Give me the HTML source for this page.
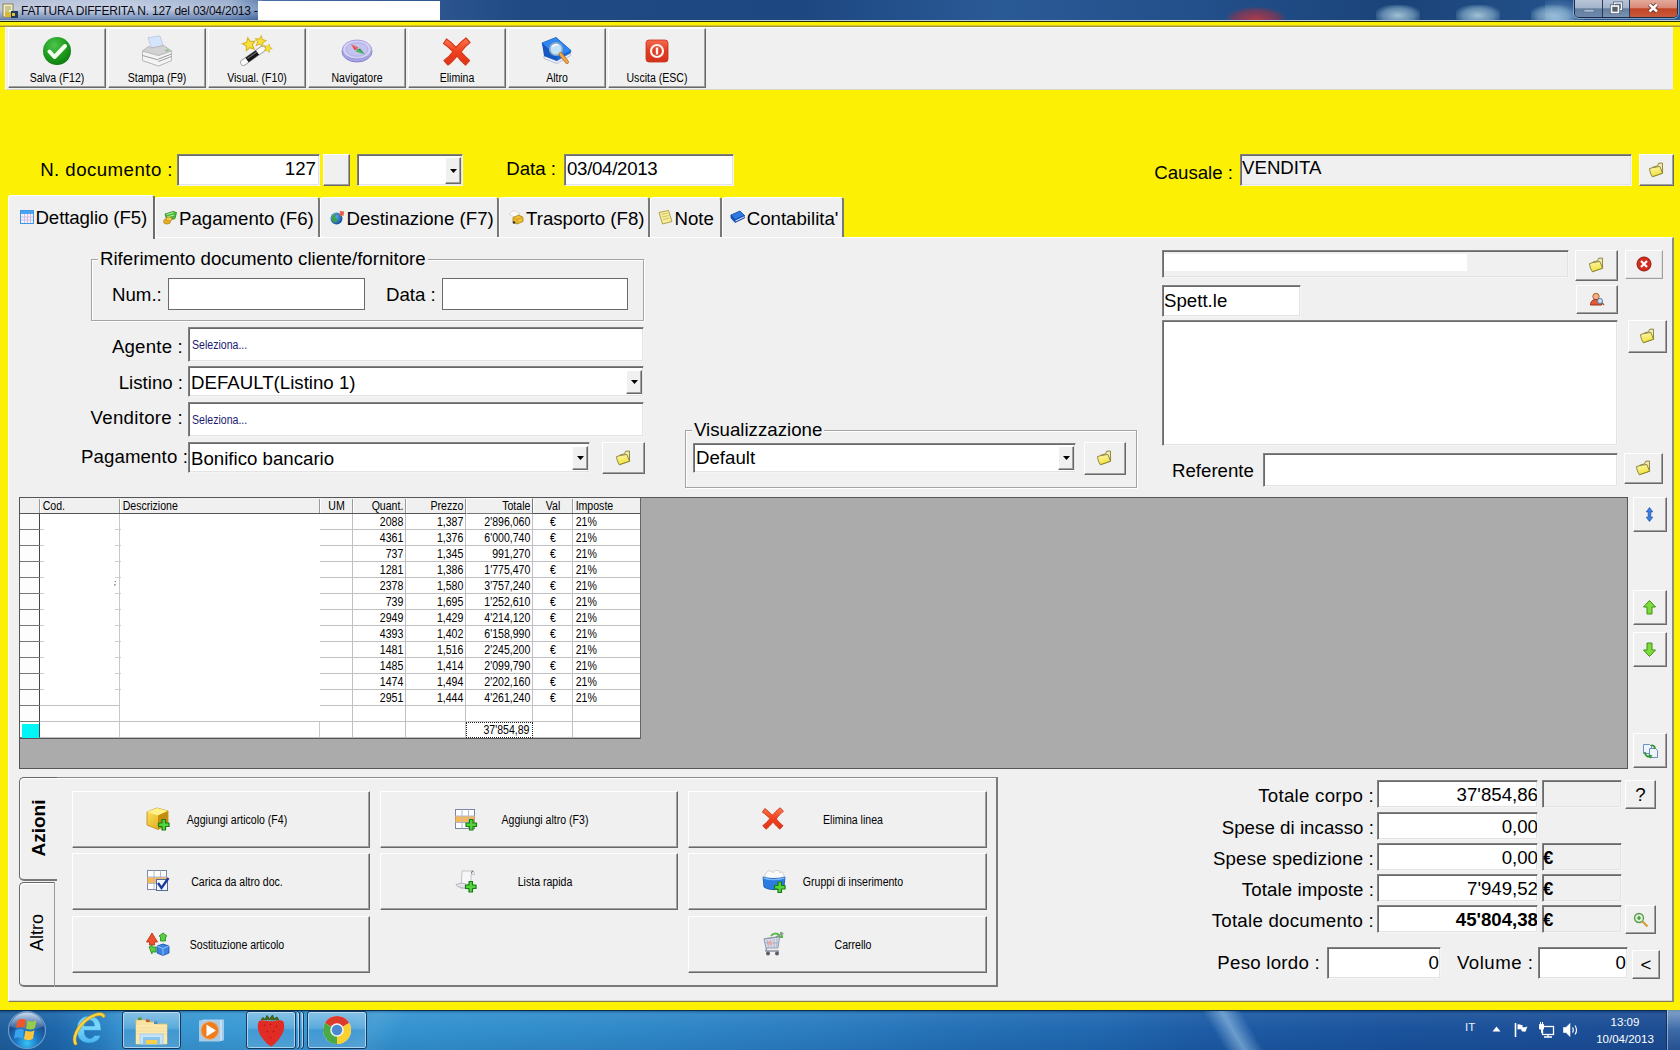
<!DOCTYPE html><html><head><meta charset="utf-8"><title>FATTURA DIFFERITA N. 127</title><style>*{box-sizing:border-box;margin:0;padding:0}
html,body{width:1680px;height:1050px;overflow:hidden;background:#fcf105;font-family:"Liberation Sans",sans-serif;color:#000}
.a{position:absolute}
.btn{position:absolute;background:#f0f0f0;border-top:1px solid #fff;border-left:1px solid #fff;border-right:1px solid #696969;border-bottom:1px solid #696969;box-shadow:inset -1px -1px 0 #a0a0a0}
.fld{position:absolute;background:#fff;border-top:1px solid #828282;border-left:1px solid #828282;border-right:1px solid #f4f4f4;border-bottom:1px solid #f4f4f4;box-shadow:inset 1px 1px 0 #696969, inset -1px -1px 0 #e3e3e3;font-size:18.67px;line-height:22px;white-space:nowrap;overflow:hidden}
.fld.g{background:#f0f0f0}
.lbl{position:absolute;font-size:18.67px;line-height:22px;white-space:nowrap}
.r{text-align:right}
.ms{position:absolute;font-size:12px;line-height:14px;white-space:nowrap;transform:scaleX(.88);transform-origin:0 50%}
.ms.c{text-align:center;transform-origin:50% 50%}
.ms.rr{text-align:right;transform-origin:100% 50%}
svg{position:absolute;overflow:visible}
.grp{position:absolute;border:1px solid #a4a4a4;box-shadow:1px 1px 0 #fff, inset 1px 1px 0 #fff}
.btn.lt{border-right-color:#a0a0a0;border-bottom-color:#a0a0a0;box-shadow:inset -1px -1px 0 #e0e0e0}
</style></head><body>
<div class="a" style="left:0px;top:0px;width:1680px;height:20px;background:linear-gradient(90deg,#aab6d0 0px,#b4c2dc 120px,#8ea4c8 230px,#4a6ea6 262px,#1f4a84 520px,#1d4781 800px,#2a5a96 1000px,#234f8a 1200px,#1a4379 1400px,#2c5c98 1680px)"></div>
<div class="a" style="left:0px;top:0px;width:262px;height:20px;background:linear-gradient(180deg,rgba(255,255,255,.12),rgba(255,255,255,.28) 45%,rgba(70,105,160,.5) 92%,rgba(60,90,140,.7) 100%)"></div>
<div class="a" style="left:258px;top:1px;width:182px;height:19px;background:#fff"></div>
<div class="a" style="left:0px;top:20px;width:1680px;height:1px;background:#b9cfd2"></div>
<div class="a" style="left:0px;top:21px;width:1680px;height:1px;background:#262c00"></div>
<div class="a" style="left:21px;top:4px;width:260px;font-size:12px;line-height:14px;white-space:nowrap;color:#0a0a14;letter-spacing:-0.22px">FATTURA DIFFERITA N. 127 del 03/04/2013 -</div>
<svg style="left:2px;top:3px" width="17" height="16" viewBox="0 0 17 16"><rect x="1" y="1" width="10" height="13" fill="#f3efc8" stroke="#8a8250"/><path d="M3 4h6M3 6h6M3 8h4" stroke="#a09a60" stroke-width="1"/><rect x="3" y="9" width="6" height="5" fill="#d8b838"/><rect x="9" y="8" width="7" height="7" fill="#1d3d5c"/><rect x="10" y="10" width="3" height="3" fill="#e0c040"/></svg>
<div class="a" style="left:1226px;top:7px;width:60px;height:13px;background:radial-gradient(ellipse at 50% 100%,#b03a48 0%,rgba(160,50,70,.6) 50%,rgba(160,50,70,0) 75%)"></div>
<div class="a" style="left:1376px;top:5px;width:44px;height:15px;background:radial-gradient(ellipse at 50% 70%,rgba(175,205,220,.9) 0%,rgba(140,180,205,.6) 50%,rgba(120,160,190,0) 80%)"></div>
<div class="a" style="left:1456px;top:5px;width:44px;height:15px;background:radial-gradient(ellipse at 50% 70%,rgba(175,205,220,.9) 0%,rgba(140,180,205,.6) 50%,rgba(120,160,190,0) 80%)"></div>
<div class="a" style="left:1531px;top:5px;width:44px;height:15px;background:radial-gradient(ellipse at 50% 70%,rgba(175,205,220,.9) 0%,rgba(140,180,205,.6) 50%,rgba(120,160,190,0) 80%)"></div>
<div class="a" style="left:1545px;top:0px;width:40px;height:20px;background:radial-gradient(ellipse at 30% 100%,rgba(150,190,220,.75) 0%,rgba(120,165,205,.35) 50%,rgba(120,165,205,0) 80%)"></div>
<div class="a" style="left:1574px;top:0px;width:104px;height:18px;border:1px solid #1b2b45;border-top:none;border-radius:0 0 5px 5px;background:#6f86a8;overflow:hidden;box-shadow:0 0 0 1px rgba(190,210,235,.55)"><div class="a" style="left:0;top:0;width:28px;height:17px;background:linear-gradient(180deg,#b8c4d8 0%,#a4b4cc 45%,#64809e 52%,#6e88ae 100%);border-right:1px solid #2a3b58"></div><div class="a" style="left:28px;top:0;width:27px;height:17px;background:linear-gradient(180deg,#b8c4d8 0%,#a4b4cc 45%,#64809e 52%,#7a92b4 100%);border-right:1px solid #2a3b58"></div><div class="a" style="left:55px;top:0;width:48px;height:17px;background:linear-gradient(180deg,#e4aa9c 0%,#d88a78 45%,#c04424 52%,#c85a3c 100%)"></div></div>
<svg style="left:1574px;top:0" width="104" height="18" viewBox="0 0 104 18"><rect x="10" y="9.500" width="10" height="2.500" fill="#a8bcd4" stroke="#5a708e" stroke-width=".6"/><rect x="40.500" y="3" width="7" height="6.500" fill="none" stroke="#3c4a62" stroke-width="2.800"/><rect x="40.500" y="3" width="7" height="6.500" fill="none" stroke="#f4f6fa" stroke-width="1.500"/><rect x="37.500" y="6" width="7" height="6.500" fill="#5a5f6a" stroke="#3c4a62" stroke-width="3"/><rect x="37.500" y="6" width="7" height="6.500" fill="#5a5f6a" stroke="#f8f9fc" stroke-width="1.700"/><path d="M75.500 4.500l7.500 7M83 4.500l-7.500 7" stroke="#6a2a20" stroke-width="4.200"/><path d="M75.500 4.500l7.500 7M83 4.500l-7.500 7" stroke="#fff" stroke-width="2.500"/></svg>
<div class="a" style="left:5px;top:27px;width:1668px;height:63px;background:#f0f0f0;border-top:1px solid #fff;border-left:1px solid #fff;border-bottom:1px solid #d8d8c0;"></div>
<div class="a" style="left:0px;top:25px;width:1680px;height:2px;background:linear-gradient(180deg,#e8d830,#8a8030)"></div>
<div class="btn" style="left:8px;top:28px;width:98px;height:60px;"></div>
<div class="ms c" style="left:8px;top:71px;width:98px;">Salva (F12)</div>
<div class="btn" style="left:108px;top:28px;width:98px;height:60px;"></div>
<div class="ms c" style="left:108px;top:71px;width:98px;">Stampa (F9)</div>
<div class="btn" style="left:208px;top:28px;width:98px;height:60px;"></div>
<div class="ms c" style="left:208px;top:71px;width:98px;">Visual. (F10)</div>
<div class="btn" style="left:308px;top:28px;width:98px;height:60px;"></div>
<div class="ms c" style="left:308px;top:71px;width:98px;">Navigatore</div>
<div class="btn" style="left:408px;top:28px;width:98px;height:60px;"></div>
<div class="ms c" style="left:408px;top:71px;width:98px;">Elimina</div>
<div class="btn" style="left:508px;top:28px;width:98px;height:60px;"></div>
<div class="ms c" style="left:508px;top:71px;width:98px;">Altro</div>
<div class="btn" style="left:608px;top:28px;width:98px;height:60px;"></div>
<div class="ms c" style="left:608px;top:71px;width:98px;">Uscita (ESC)</div>
<svg style="left:42px;top:36px" width="30" height="30" viewBox="0 0 30 30"><defs><radialGradient id="gck" cx="40%" cy="30%" r="75%"><stop offset="0" stop-color="#4cc64c"/><stop offset=".6" stop-color="#1e9a1e"/><stop offset="1" stop-color="#0c7a10"/></radialGradient></defs><circle cx="15" cy="15" r="14" fill="url(#gck)"/><path d="M7.500 15.500l5 5.500l10.500-11" fill="none" stroke="#f4fff0" stroke-width="4" stroke-linecap="round" stroke-linejoin="round"/></svg>
<svg style="left:141px;top:35px" width="32" height="32" viewBox="0 0 32 32"><path d="M7 2.500c4 0 8-1.500 12-1.500l3.500 10.500l-12 2z" fill="#d4e4fa" stroke="#b8c8e0" stroke-width=".8"/><path d="M1.500 16l6-4.500l3 1.500l12-2.500l8 5.500v9.500l-13 5.500l-16-5.500z" fill="#e6e6e6" stroke="#b0b0b0" stroke-width=".8"/><path d="M1.500 16l16 4.500l13-4.500v9.500l-13 5.500l-16-5.500z" fill="#f4f4f4" stroke="#b4b4b4" stroke-width=".8"/><path d="M17.500 24l13-5M17.500 26.500l13-5M1.500 20.500l16 4.500" stroke="#9c9c9c" stroke-width="1" fill="none"/><path d="M1.500 16l16 4.500l13-4.500l-8-5.500l-12 2.500l-3-1.500z" fill="#d2d2d2" stroke="#b0b0b0" stroke-width=".6"/><ellipse cx="26" cy="15.500" rx="2" ry="1" fill="#8cc07c"/></svg>
<svg style="left:241px;top:35px" width="32" height="32" viewBox="0 0 32 32"><path d="M2.500 27.500l19-13.500" stroke="#9a9a9a" stroke-width="6.500" stroke-linecap="round"/><path d="M2.500 27.500l19-13.500" stroke="#fafafa" stroke-width="5" stroke-linecap="round"/><path d="M6 25l10.500-7.500" stroke="#141414" stroke-width="5.400"/><path d="M6.500 23.500l9.500-6.800" stroke="#6a6a6a" stroke-width="1.200"/><path d="M0 -5l1.500 3.300l3.600 .4l-2.700 2.500l.8 3.600l-3.200-1.800l-3.200 1.800l.8-3.600l-2.700-2.500l3.600-.4z" transform="translate(8 9) scale(1.250) rotate(-12)" fill="#f6e23c" stroke="#d8b420" stroke-width=".9"/><path d="M0 -5l1.500 3.300l3.600 .4l-2.700 2.500l.8 3.600l-3.200-1.800l-3.200 1.800l.8-3.600l-2.700-2.500l3.600-.4z" transform="translate(19.500 6) scale(1.050) rotate(10)" fill="#f6e23c" stroke="#d8b420" stroke-width=".9"/><path d="M0 -5l1.500 3.300l3.600 .4l-2.700 2.500l.8 3.600l-3.200-1.800l-3.200 1.800l.8-3.600l-2.700-2.500l3.600-.4z" transform="translate(27 13) scale(.8) rotate(20)" fill="#f6e23c" stroke="#d8b420" stroke-width=".9"/></svg>
<svg style="left:341px;top:38px" width="32" height="26" viewBox="0 0 32 26"><ellipse cx="16" cy="13.500" rx="15" ry="10.500" fill="#a8a4e4" stroke="#8884cc"/><ellipse cx="16" cy="11.500" rx="14.500" ry="9.500" fill="#d2d0f4" stroke="#9894d8" stroke-width=".8"/><ellipse cx="16" cy="11.500" rx="11" ry="6.800" fill="#c4c2ee" stroke="#aaa6e0" stroke-width=".8"/><path d="M16 11.500l-6-5.500l3.500 6z" fill="#e03c3c"/><path d="M16 11.500l-6-5.500l7.500 3.500z" fill="#f06060"/><path d="M16 11.500l8 5l-5-6z" fill="#2c9a4c"/><path d="M16 11.500l8 5l-9.500-3z" fill="#48b868"/></svg>
<svg style="left:443px;top:37px" width="29" height="29" viewBox="0 0 29 29"><defs><linearGradient id="grx" x1="0" y1="0" x2="0" y2="1"><stop offset="0" stop-color="#ff7a50"/><stop offset=".5" stop-color="#f0401e"/><stop offset="1" stop-color="#e03418"/></linearGradient></defs><path d="M3.500 2c2.500 1.500 6 4.500 9.500 8.500c3-3.500 6.500-7 10-9.500l4 4.500c-3.500 2.500-6.500 6-9 9.500c3 3.500 6 6.500 8.500 8.500l-4 4.500c-3-2.500-6-5.500-8.500-9c-3 3.500-6 7-9 9l-4-4.500c3.500-2.500 6.500-5.500 9-9c-3-3-6.500-6-9.500-8z" fill="url(#grx)" stroke="#d43a1c" stroke-width="1.200" stroke-linejoin="round"/></svg>
<svg style="left:541px;top:37px" width="32" height="30" viewBox="0 0 32 30"><path d="M1 6l14-5.500l15 13l-1 3l-13 7.500l-13-13z" fill="#1868d8" stroke="#0c4cb0" stroke-width=".8"/><path d="M3 19l13 5l13-7.500l.5 2l-13.500 8l-13-5z" fill="#f4f4fc" stroke="#8898c8" stroke-width=".6"/><path d="M1 6l14-5.500l15 13l-14 6z" fill="#2f86ee"/><path d="M1 6l2 13l13 5v-4.500z" fill="#1458c0"/><circle cx="15" cy="12" r="6.300" fill="#c2e2f8" stroke="#88a8c8" stroke-width="1.600"/><path d="M11.500 10c1-2 3.500-3 5.500-2" fill="none" stroke="#fff" stroke-width="1.400"/><path d="M19.500 17l6.500 8" stroke="#b87828" stroke-width="3.800" stroke-linecap="round"/><path d="M19.500 17l6.500 8" stroke="#f4a848" stroke-width="2.200" stroke-linecap="round"/></svg>
<svg style="left:645px;top:39px" width="24" height="24" viewBox="0 0 24 24"><defs><linearGradient id="gex" x1="0" y1="0" x2="0" y2="1"><stop offset="0" stop-color="#f46a50"/><stop offset=".5" stop-color="#e03c24"/><stop offset="1" stop-color="#d4341c"/></linearGradient></defs><rect x="1" y="1" width="22" height="22" rx="3" fill="url(#gex)" stroke="#c83018" stroke-width=".8"/><circle cx="12" cy="12" r="6" fill="none" stroke="#fff4ee" stroke-width="2.200"/><path d="M12 8.500v7" stroke="#fff4ee" stroke-width="2.400"/></svg>
<div class="lbl r" style="left:20px;top:159px;width:153px;letter-spacing:.45px">N. documento :</div>
<div class="fld" style="left:177px;top:154px;width:143px;height:32px;text-align:right;padding:3px 3px 0 0">127</div>
<div class="btn" style="left:323px;top:154px;width:27px;height:32px;"></div>
<div class="fld" style="left:357px;top:154px;width:106px;height:32px;"></div>
<div class="btn" style="left:445px;top:157px;width:16px;height:27px;"><svg style="left:4px;top:11px" width="7" height="4" viewBox="0 0 7 4"><path d="M0 0h7l-3.500 4z" fill="#000"/></svg></div>
<div class="lbl r" style="left:500px;top:158px;width:56px;">Data :</div>
<div class="fld" style="left:564px;top:154px;width:170px;height:32px;padding:3px 0 0 2px;letter-spacing:-.3px">03/04/2013</div>
<div class="lbl r" style="left:1140px;top:162px;width:93px;">Causale :</div>
<div class="fld g" style="left:1240px;top:154px;width:392px;height:32px;padding:0 0 0 1px;line-height:25px">VENDITA</div>
<div class="a" style="left:8px;top:237px;width:1666px;height:765px;background:#f0f0f0;border-left:1px solid #fff;border-top:1px solid #fff;border-right:2px solid #8c8c80;border-bottom:1px solid #85794f;box-shadow:inset 0 -1px 0 #d8d8d0"></div>
<div class="a" style="left:8px;top:195px;width:147px;height:44px;background:#f0f0f0;border-left:1px solid #fff;border-top:1px solid #fff;border-right:2px solid #6c6c6c;border-radius:3px 3px 0 0"></div>
<div class="lbl" style="left:35.5px;top:207px;width:119px;letter-spacing:-.1px">Dettaglio (F5)</div>
<div class="a" style="left:155px;top:197px;width:165px;height:40px;background:#f0f0f0;border-left:1px solid #fff;border-top:1px solid #fff;border-right:2px solid #787878;border-radius:3px 3px 0 0"></div>
<div class="lbl" style="left:179px;top:208px;width:140px;">Pagamento (F6)</div>
<div class="a" style="left:320px;top:197px;width:179px;height:40px;background:#f0f0f0;border-left:1px solid #fff;border-top:1px solid #fff;border-right:2px solid #787878;border-radius:3px 3px 0 0"></div>
<div class="lbl" style="left:346.5px;top:208px;width:154px;">Destinazione (F7)</div>
<div class="a" style="left:499px;top:197px;width:151px;height:40px;background:#f0f0f0;border-left:1px solid #fff;border-top:1px solid #fff;border-right:2px solid #787878;border-radius:3px 3px 0 0"></div>
<div class="lbl" style="left:526px;top:208px;width:126px;">Trasporto (F8)</div>
<div class="a" style="left:650px;top:197px;width:72px;height:40px;background:#f0f0f0;border-left:1px solid #fff;border-top:1px solid #fff;border-right:2px solid #787878;border-radius:3px 3px 0 0"></div>
<div class="lbl" style="left:674.5px;top:208px;width:47px;">Note</div>
<div class="a" style="left:722px;top:197px;width:122px;height:40px;background:#f0f0f0;border-left:1px solid #fff;border-top:1px solid #fff;border-right:2px solid #787878;border-radius:3px 3px 0 0"></div>
<div class="lbl" style="left:746.7px;top:208px;width:97px;">Contabilita'</div>
<svg style="left:20px;top:210px" width="14" height="14" viewBox="0 0 14 14"><rect x=".5" y=".5" width="13" height="13" fill="#fdeef4" stroke="#3a98e8"/><rect x="1" y="1" width="12" height="3" fill="#4aa4f0"/><path d="M1 7h12M1 10h12M4.500 4v9M7.500 4v9M10.500 4v9" stroke="#c8c0e8" stroke-width="1"/></svg>
<svg style="left:163px;top:211px" width="14" height="14" viewBox="0 0 14 14"><path d="M2 3l8-2.500l3.500 1l-1.500 6l-8 2.500z" fill="#4cb83c" stroke="#2a8a24" stroke-width=".8"/><path d="M3.500 3.500l7-2M4 6l7-2" stroke="#b8f0a0" stroke-width="1"/><ellipse cx="4" cy="10.500" rx="3.500" ry="2.500" fill="#e8b028" stroke="#b88418" stroke-width=".8"/><ellipse cx="6" cy="8" rx="3" ry="2" fill="#f4cc48" stroke="#b88418" stroke-width=".7"/></svg>
<svg style="left:330px;top:210px" width="15" height="15" viewBox="0 0 15 15"><defs><radialGradient id="ggl" cx="35%" cy="35%" r="70%"><stop offset="0" stop-color="#68b8f0"/><stop offset="1" stop-color="#14509c"/></radialGradient></defs><circle cx="6.500" cy="8.500" r="6" fill="url(#ggl)"/><path d="M2 7c1-2 3-3 4-2.500c1 1-1 2-.5 3.500c.5 1 2 1 2 2.500c-1 2-3 2.500-4.500 1c-1-1.500-1.500-3-1-4.500z" fill="#3ca04c"/><path d="M9.500 1l4.500 .5l-.5 4.500l-2-1l-1 1.500l-1.500-1.500l1.500-1.500z" fill="#e85838"/></svg>
<svg style="left:508px;top:210px" width="16" height="15" viewBox="0 0 16 15"><path d="M1 4l5-3.500l6 3l-5 4z" fill="#fafafa" stroke="#d0d0d0" stroke-width=".7"/><path d="M5 7.500l6-2.500l4 2.500v4l-6 2.500l-4-2z" fill="#f0c030" stroke="#a87c18" stroke-width=".8"/><path d="M5 7.500l4 2l6-2.500M9 9.500v4.500" fill="none" stroke="#c89820" stroke-width=".8"/><circle cx="6" cy="12.500" r="1.300" fill="#333"/></svg>
<svg style="left:658px;top:210px" width="15" height="15" viewBox="0 0 15 15"><path d="M1 2.500l9.500-2l3.500 11l-9.500 2.500z" fill="#f8ec98" stroke="#a89840" stroke-width=".9"/><path d="M3.500 4.500l6.500-1.500M4.300 7l6.500-1.500M5 9.500l6.500-1.500" stroke="#c8b860" stroke-width=".8"/></svg>
<svg style="left:730px;top:210px" width="15" height="14" viewBox="0 0 15 14"><path d="M1 5l9-4l4.500 4.500l-9.500 4.500z" fill="#2f7ae0" stroke="#0c48a8" stroke-width=".8"/><path d="M1 5l4 5l9.500-4.500v2.500l-9.500 4.500l-4-4.500z" fill="#1858c0" stroke="#0c48a8" stroke-width=".8"/><path d="M5.500 11l9-4.300" stroke="#e8f0ff" stroke-width="1"/></svg>
<div class="grp" style="left:91px;top:259px;width:553px;height:62px;"></div>
<div class="lbl" style="left:98px;top:248px;background:#f0f0f0;padding:0 2px">Riferimento documento cliente/fornitore</div>
<div class="lbl" style="left:112px;top:284px;width:60px;">Num.:</div>
<div class="fld" style="left:168px;top:278px;width:197px;height:32px;box-shadow:none;border:1px solid #6a6a6a"></div>
<div class="lbl" style="left:386px;top:284px;width:60px;">Data :</div>
<div class="fld" style="left:442px;top:278px;width:186px;height:32px;box-shadow:none;border:1px solid #6a6a6a"></div>
<div class="lbl r" style="left:60px;top:336px;width:123px;letter-spacing:.2px">Agente :</div>
<div class="fld" style="left:188px;top:327px;width:456px;height:35px;"><span style="font-size:12px;color:#1a1a70;position:absolute;left:3px;top:6px;display:inline-block;transform:scaleX(.88);transform-origin:0 50%">Seleziona...</span></div>
<div class="lbl r" style="left:60px;top:372px;width:123px;">Listino :</div>
<div class="fld" style="left:188px;top:366px;width:456px;height:31px;padding:5px 0 0 2px">DEFAULT(Listino 1)</div>
<div class="btn" style="left:626px;top:370px;width:16px;height:24px;"><svg style="left:4px;top:9px" width="7" height="4" viewBox="0 0 7 4"><path d="M0 0h7l-3.500 4z" fill="#000"/></svg></div>
<div class="lbl r" style="left:60px;top:407px;width:123px;letter-spacing:.3px">Venditore :</div>
<div class="fld" style="left:188px;top:402px;width:456px;height:35px;"><span style="font-size:12px;color:#1a1a70;position:absolute;left:3px;top:6px;display:inline-block;transform:scaleX(.88);transform-origin:0 50%">Seleziona...</span></div>
<div class="lbl r" style="left:60px;top:446px;width:128px;letter-spacing:.12px">Pagamento :</div>
<div class="fld" style="left:188px;top:442px;width:402px;height:31px;padding:5px 0 0 2px">Bonifico bancario</div>
<div class="btn" style="left:572px;top:446px;width:16px;height:24px;"><svg style="left:4px;top:9px" width="7" height="4" viewBox="0 0 7 4"><path d="M0 0h7l-3.500 4z" fill="#000"/></svg></div>
<svg width="0" height="0" style="left:0;top:0"><defs><linearGradient id="gfold" x1="0" y1="0" x2=".3" y2="1"><stop offset="0" stop-color="#fbf6b8"/><stop offset="1" stop-color="#f3e338"/></linearGradient></defs></svg>
<div class="btn" style="left:602px;top:442px;width:43px;height:32px;"><svg style="left:13px;top:7px" width="15" height="16" viewBox="0 0 15 16"><path d="M3.800 5.200L8.600 3.800L9.600 1.300L13.400 1L13.600 11.200L3.400 14.700Z" fill="#f5ecb4" stroke="#857a34" stroke-width=".9" stroke-linejoin="round"/><path d="M.5 6.600L3.800 5.600L10.800 4.400L13.600 11.200L3.400 14.700C1.800 12.500 .8 9.500 .5 6.600Z" fill="url(#gfold)" stroke="#857a34" stroke-width=".9" stroke-linejoin="round"/></svg></div>
<div class="btn" style="left:1639px;top:154px;width:35px;height:32px;"><svg style="left:9px;top:7px" width="15" height="16" viewBox="0 0 15 16"><path d="M3.800 5.200L8.600 3.800L9.600 1.300L13.400 1L13.600 11.200L3.400 14.700Z" fill="#f5ecb4" stroke="#857a34" stroke-width=".9" stroke-linejoin="round"/><path d="M.5 6.600L3.800 5.600L10.800 4.400L13.600 11.200L3.400 14.700C1.800 12.500 .8 9.500 .5 6.600Z" fill="url(#gfold)" stroke="#857a34" stroke-width=".9" stroke-linejoin="round"/></svg></div>
<div class="grp" style="left:685px;top:430px;width:452px;height:58px;"></div>
<div class="lbl" style="left:692px;top:419px;background:#f0f0f0;padding:0 2px">Visualizzazione</div>
<div class="fld" style="left:693px;top:443px;width:383px;height:30px;padding:3px 0 0 2px">Default</div>
<div class="btn" style="left:1058px;top:446px;width:16px;height:24px;"><svg style="left:4px;top:9px" width="7" height="4" viewBox="0 0 7 4"><path d="M0 0h7l-3.500 4z" fill="#000"/></svg></div>
<div class="btn" style="left:1084px;top:442px;width:42px;height:33px;"><svg style="left:12px;top:7px" width="15" height="16" viewBox="0 0 15 16"><path d="M3.800 5.200L8.600 3.800L9.600 1.300L13.400 1L13.600 11.200L3.400 14.700Z" fill="#f5ecb4" stroke="#857a34" stroke-width=".9" stroke-linejoin="round"/><path d="M.5 6.600L3.800 5.600L10.800 4.400L13.600 11.200L3.400 14.700C1.800 12.500 .8 9.500 .5 6.600Z" fill="url(#gfold)" stroke="#857a34" stroke-width=".9" stroke-linejoin="round"/></svg></div>
<div class="fld g" style="left:1162px;top:250px;width:407px;height:28px;"><div class="a" style="left:1px;top:3px;width:303px;height:17px;background:#fff"></div></div>
<div class="btn" style="left:1575px;top:250px;width:43px;height:31px;"><svg style="left:13px;top:6px" width="15" height="16" viewBox="0 0 15 16"><path d="M3.800 5.200L8.600 3.800L9.600 1.300L13.400 1L13.600 11.200L3.400 14.700Z" fill="#f5ecb4" stroke="#857a34" stroke-width=".9" stroke-linejoin="round"/><path d="M.5 6.600L3.800 5.600L10.800 4.400L13.600 11.200L3.400 14.700C1.800 12.500 .8 9.500 .5 6.600Z" fill="url(#gfold)" stroke="#857a34" stroke-width=".9" stroke-linejoin="round"/></svg></div>
<div class="btn lt" style="left:1625px;top:250px;width:38px;height:29px;"><svg style="left:10px;top:5px" width="16" height="16" viewBox="0 0 16 16"><circle cx="8" cy="8" r="7" fill="#d62a1e" stroke="#8c1a10"/><path d="M5 5l6 6M11 5l-6 6" stroke="#fff" stroke-width="2.200"/></svg></div>
<div class="fld" style="left:1162px;top:285px;width:139px;height:32px;padding:4px 0 0 1px">Spett.le</div>
<div class="btn" style="left:1576px;top:285px;width:42px;height:29px;"><svg style="left:12px;top:6px" width="16" height="16" viewBox="0 0 16 16"><circle cx="7" cy="4.500" r="3.200" fill="#f0b088" stroke="#b06030"/><path d="M1.500 13c0-4 2.500-5.500 5.500-5.500s5.500 1.500 5.500 5.500z" fill="#e05a3a" stroke="#a03018"/><circle cx="11" cy="9" r="2.500" fill="#cfe4f8" stroke="#5080b0"/><path d="M12.800 10.800l2.200 2.200" stroke="#886030" stroke-width="1.500"/></svg></div>
<div class="fld" style="left:1162px;top:320px;width:456px;height:126px;"></div>
<div class="btn" style="left:1628px;top:320px;width:39px;height:33px;"><svg style="left:11px;top:7px" width="15" height="16" viewBox="0 0 15 16"><path d="M3.800 5.200L8.600 3.800L9.600 1.300L13.400 1L13.600 11.200L3.400 14.700Z" fill="#f5ecb4" stroke="#857a34" stroke-width=".9" stroke-linejoin="round"/><path d="M.5 6.600L3.800 5.600L10.800 4.400L13.600 11.200L3.400 14.700C1.800 12.500 .8 9.500 .5 6.600Z" fill="url(#gfold)" stroke="#857a34" stroke-width=".9" stroke-linejoin="round"/></svg></div>
<div class="lbl" style="left:1172px;top:460px;width:90px;">Referente</div>
<div class="fld" style="left:1263px;top:453px;width:355px;height:34px;"></div>
<div class="btn" style="left:1624px;top:453px;width:39px;height:31px;"><svg style="left:11px;top:6px" width="15" height="16" viewBox="0 0 15 16"><path d="M3.800 5.200L8.600 3.800L9.600 1.300L13.400 1L13.600 11.200L3.400 14.700Z" fill="#f5ecb4" stroke="#857a34" stroke-width=".9" stroke-linejoin="round"/><path d="M.5 6.600L3.800 5.600L10.800 4.400L13.600 11.200L3.400 14.700C1.800 12.500 .8 9.500 .5 6.600Z" fill="url(#gfold)" stroke="#857a34" stroke-width=".9" stroke-linejoin="round"/></svg></div>
<div class="a" style="left:19px;top:497px;width:1609px;height:272px;background:#ababab;border:1px solid #555"></div>
<div class="a" style="left:20px;top:498px;width:621px;height:241px;background:#fff"></div>
<div class="a" style="left:20px;top:498px;width:621px;height:16px;background:#f0f0f0;border-bottom:1px solid #555"></div>
<div class="a" style="left:20px;top:514px;width:20px;height:225px;background:#fdfdfd;border-right:1px solid #444"></div>
<div class="ms" style="left:40px;top:499px;width:80px;padding-left:3px;">Cod.</div>
<div class="ms" style="left:120px;top:499px;width:200px;padding-left:3px;">Descrizione</div>
<div class="ms c" style="left:320px;top:499px;width:33px;;">UM</div>
<div class="ms rr" style="left:353px;top:499px;width:53px;padding-right:3px;">Quant.</div>
<div class="ms rr" style="left:406px;top:499px;width:60px;padding-right:3px;">Prezzo</div>
<div class="ms rr" style="left:466px;top:499px;width:67px;padding-right:3px;">Totale</div>
<div class="ms c" style="left:533px;top:499px;width:40px;;">Val</div>
<div class="ms" style="left:573px;top:499px;width:68px;padding-left:3px;">Imposte</div>
<div class="a" style="left:39px;top:499px;width:1px;height:14px;background:#9a9a9a"></div>
<div class="a" style="left:40px;top:499px;width:1px;height:14px;background:#fff"></div>
<div class="a" style="left:119px;top:499px;width:1px;height:14px;background:#9a9a9a"></div>
<div class="a" style="left:120px;top:499px;width:1px;height:14px;background:#fff"></div>
<div class="a" style="left:319px;top:499px;width:1px;height:14px;background:#9a9a9a"></div>
<div class="a" style="left:320px;top:499px;width:1px;height:14px;background:#fff"></div>
<div class="a" style="left:352px;top:499px;width:1px;height:14px;background:#9a9a9a"></div>
<div class="a" style="left:353px;top:499px;width:1px;height:14px;background:#fff"></div>
<div class="a" style="left:405px;top:499px;width:1px;height:14px;background:#9a9a9a"></div>
<div class="a" style="left:406px;top:499px;width:1px;height:14px;background:#fff"></div>
<div class="a" style="left:465px;top:499px;width:1px;height:14px;background:#9a9a9a"></div>
<div class="a" style="left:466px;top:499px;width:1px;height:14px;background:#fff"></div>
<div class="a" style="left:532px;top:499px;width:1px;height:14px;background:#9a9a9a"></div>
<div class="a" style="left:533px;top:499px;width:1px;height:14px;background:#fff"></div>
<div class="a" style="left:572px;top:499px;width:1px;height:14px;background:#9a9a9a"></div>
<div class="a" style="left:573px;top:499px;width:1px;height:14px;background:#fff"></div>
<div class="a" style="left:466px;top:498px;width:67px;height:16px;border:1px solid #777;border-top-color:#fff;border-left-color:#fff;"></div>
<div class="a" style="left:352px;top:514px;width:1px;height:225px;background:#c0c0c0"></div>
<div class="a" style="left:405px;top:514px;width:1px;height:225px;background:#c0c0c0"></div>
<div class="a" style="left:465px;top:514px;width:1px;height:225px;background:#c0c0c0"></div>
<div class="a" style="left:532px;top:514px;width:1px;height:225px;background:#c0c0c0"></div>
<div class="a" style="left:572px;top:514px;width:1px;height:225px;background:#c0c0c0"></div>
<div class="a" style="left:640px;top:514px;width:1px;height:225px;background:#c0c0c0"></div>
<div class="a" style="left:119px;top:514px;width:1px;height:225px;background:#c8c8c8"></div>
<div class="a" style="left:319px;top:722px;width:1px;height:17px;background:#c8c8c8"></div>
<div class="a" style="left:20px;top:529px;width:20px;height:1px;background:#777"></div>
<div class="a" style="left:40px;top:529px;width:4px;height:1px;background:#ccc"></div>
<div class="a" style="left:115px;top:529px;width:6px;height:1px;background:#ccc"></div>
<div class="a" style="left:320px;top:529px;width:321px;height:1px;background:#c0c0c0"></div>
<div class="a" style="left:20px;top:545px;width:20px;height:1px;background:#777"></div>
<div class="a" style="left:40px;top:545px;width:4px;height:1px;background:#ccc"></div>
<div class="a" style="left:115px;top:545px;width:6px;height:1px;background:#ccc"></div>
<div class="a" style="left:320px;top:545px;width:321px;height:1px;background:#c0c0c0"></div>
<div class="a" style="left:20px;top:561px;width:20px;height:1px;background:#777"></div>
<div class="a" style="left:40px;top:561px;width:4px;height:1px;background:#ccc"></div>
<div class="a" style="left:115px;top:561px;width:6px;height:1px;background:#ccc"></div>
<div class="a" style="left:320px;top:561px;width:321px;height:1px;background:#c0c0c0"></div>
<div class="a" style="left:20px;top:577px;width:20px;height:1px;background:#777"></div>
<div class="a" style="left:40px;top:577px;width:4px;height:1px;background:#ccc"></div>
<div class="a" style="left:115px;top:577px;width:6px;height:1px;background:#ccc"></div>
<div class="a" style="left:320px;top:577px;width:321px;height:1px;background:#c0c0c0"></div>
<div class="a" style="left:20px;top:593px;width:20px;height:1px;background:#777"></div>
<div class="a" style="left:40px;top:593px;width:4px;height:1px;background:#ccc"></div>
<div class="a" style="left:115px;top:593px;width:6px;height:1px;background:#ccc"></div>
<div class="a" style="left:320px;top:593px;width:321px;height:1px;background:#c0c0c0"></div>
<div class="a" style="left:20px;top:609px;width:20px;height:1px;background:#777"></div>
<div class="a" style="left:40px;top:609px;width:4px;height:1px;background:#ccc"></div>
<div class="a" style="left:115px;top:609px;width:6px;height:1px;background:#ccc"></div>
<div class="a" style="left:320px;top:609px;width:321px;height:1px;background:#c0c0c0"></div>
<div class="a" style="left:20px;top:625px;width:20px;height:1px;background:#777"></div>
<div class="a" style="left:40px;top:625px;width:4px;height:1px;background:#ccc"></div>
<div class="a" style="left:115px;top:625px;width:6px;height:1px;background:#ccc"></div>
<div class="a" style="left:320px;top:625px;width:321px;height:1px;background:#c0c0c0"></div>
<div class="a" style="left:20px;top:641px;width:20px;height:1px;background:#777"></div>
<div class="a" style="left:40px;top:641px;width:4px;height:1px;background:#ccc"></div>
<div class="a" style="left:115px;top:641px;width:6px;height:1px;background:#ccc"></div>
<div class="a" style="left:320px;top:641px;width:321px;height:1px;background:#c0c0c0"></div>
<div class="a" style="left:20px;top:657px;width:20px;height:1px;background:#777"></div>
<div class="a" style="left:40px;top:657px;width:4px;height:1px;background:#ccc"></div>
<div class="a" style="left:115px;top:657px;width:6px;height:1px;background:#ccc"></div>
<div class="a" style="left:320px;top:657px;width:321px;height:1px;background:#c0c0c0"></div>
<div class="a" style="left:20px;top:673px;width:20px;height:1px;background:#777"></div>
<div class="a" style="left:40px;top:673px;width:4px;height:1px;background:#ccc"></div>
<div class="a" style="left:115px;top:673px;width:6px;height:1px;background:#ccc"></div>
<div class="a" style="left:320px;top:673px;width:321px;height:1px;background:#c0c0c0"></div>
<div class="a" style="left:20px;top:689px;width:20px;height:1px;background:#777"></div>
<div class="a" style="left:40px;top:689px;width:4px;height:1px;background:#ccc"></div>
<div class="a" style="left:115px;top:689px;width:6px;height:1px;background:#ccc"></div>
<div class="a" style="left:320px;top:689px;width:321px;height:1px;background:#c0c0c0"></div>
<div class="a" style="left:20px;top:705px;width:20px;height:1px;background:#777"></div>
<div class="a" style="left:40px;top:705px;width:80px;height:1px;background:#c0c0c0"></div>
<div class="a" style="left:320px;top:705px;width:321px;height:1px;background:#c0c0c0"></div>
<div class="a" style="left:20px;top:721px;width:20px;height:1px;background:#777"></div>
<div class="a" style="left:40px;top:721px;width:601px;height:1px;background:#c0c0c0"></div>
<div class="a" style="left:20px;top:737px;width:20px;height:1px;background:#777"></div>
<div class="a" style="left:40px;top:737px;width:601px;height:1px;background:#c0c0c0"></div>
<div class="ms rr" style="left:353px;top:515px;width:53px;padding-right:3px;">2088</div>
<div class="ms rr" style="left:406px;top:515px;width:60px;padding-right:3px;">1,387</div>
<div class="ms rr" style="left:466px;top:515px;width:67px;padding-right:3px;">2'896,060</div>
<div class="ms c" style="left:533px;top:515px;width:40px;;">€</div>
<div class="ms" style="left:573px;top:515px;width:68px;padding-left:3px;">21%</div>
<div class="ms rr" style="left:353px;top:531px;width:53px;padding-right:3px;">4361</div>
<div class="ms rr" style="left:406px;top:531px;width:60px;padding-right:3px;">1,376</div>
<div class="ms rr" style="left:466px;top:531px;width:67px;padding-right:3px;">6'000,740</div>
<div class="ms c" style="left:533px;top:531px;width:40px;;">€</div>
<div class="ms" style="left:573px;top:531px;width:68px;padding-left:3px;">21%</div>
<div class="ms rr" style="left:353px;top:547px;width:53px;padding-right:3px;">737</div>
<div class="ms rr" style="left:406px;top:547px;width:60px;padding-right:3px;">1,345</div>
<div class="ms rr" style="left:466px;top:547px;width:67px;padding-right:3px;">991,270</div>
<div class="ms c" style="left:533px;top:547px;width:40px;;">€</div>
<div class="ms" style="left:573px;top:547px;width:68px;padding-left:3px;">21%</div>
<div class="ms rr" style="left:353px;top:563px;width:53px;padding-right:3px;">1281</div>
<div class="ms rr" style="left:406px;top:563px;width:60px;padding-right:3px;">1,386</div>
<div class="ms rr" style="left:466px;top:563px;width:67px;padding-right:3px;">1'775,470</div>
<div class="ms c" style="left:533px;top:563px;width:40px;;">€</div>
<div class="ms" style="left:573px;top:563px;width:68px;padding-left:3px;">21%</div>
<div class="ms rr" style="left:353px;top:579px;width:53px;padding-right:3px;">2378</div>
<div class="ms rr" style="left:406px;top:579px;width:60px;padding-right:3px;">1,580</div>
<div class="ms rr" style="left:466px;top:579px;width:67px;padding-right:3px;">3'757,240</div>
<div class="ms c" style="left:533px;top:579px;width:40px;;">€</div>
<div class="ms" style="left:573px;top:579px;width:68px;padding-left:3px;">21%</div>
<div class="ms rr" style="left:353px;top:595px;width:53px;padding-right:3px;">739</div>
<div class="ms rr" style="left:406px;top:595px;width:60px;padding-right:3px;">1,695</div>
<div class="ms rr" style="left:466px;top:595px;width:67px;padding-right:3px;">1'252,610</div>
<div class="ms c" style="left:533px;top:595px;width:40px;;">€</div>
<div class="ms" style="left:573px;top:595px;width:68px;padding-left:3px;">21%</div>
<div class="ms rr" style="left:353px;top:611px;width:53px;padding-right:3px;">2949</div>
<div class="ms rr" style="left:406px;top:611px;width:60px;padding-right:3px;">1,429</div>
<div class="ms rr" style="left:466px;top:611px;width:67px;padding-right:3px;">4'214,120</div>
<div class="ms c" style="left:533px;top:611px;width:40px;;">€</div>
<div class="ms" style="left:573px;top:611px;width:68px;padding-left:3px;">21%</div>
<div class="ms rr" style="left:353px;top:627px;width:53px;padding-right:3px;">4393</div>
<div class="ms rr" style="left:406px;top:627px;width:60px;padding-right:3px;">1,402</div>
<div class="ms rr" style="left:466px;top:627px;width:67px;padding-right:3px;">6'158,990</div>
<div class="ms c" style="left:533px;top:627px;width:40px;;">€</div>
<div class="ms" style="left:573px;top:627px;width:68px;padding-left:3px;">21%</div>
<div class="ms rr" style="left:353px;top:643px;width:53px;padding-right:3px;">1481</div>
<div class="ms rr" style="left:406px;top:643px;width:60px;padding-right:3px;">1,516</div>
<div class="ms rr" style="left:466px;top:643px;width:67px;padding-right:3px;">2'245,200</div>
<div class="ms c" style="left:533px;top:643px;width:40px;;">€</div>
<div class="ms" style="left:573px;top:643px;width:68px;padding-left:3px;">21%</div>
<div class="ms rr" style="left:353px;top:659px;width:53px;padding-right:3px;">1485</div>
<div class="ms rr" style="left:406px;top:659px;width:60px;padding-right:3px;">1,414</div>
<div class="ms rr" style="left:466px;top:659px;width:67px;padding-right:3px;">2'099,790</div>
<div class="ms c" style="left:533px;top:659px;width:40px;;">€</div>
<div class="ms" style="left:573px;top:659px;width:68px;padding-left:3px;">21%</div>
<div class="ms rr" style="left:353px;top:675px;width:53px;padding-right:3px;">1474</div>
<div class="ms rr" style="left:406px;top:675px;width:60px;padding-right:3px;">1,494</div>
<div class="ms rr" style="left:466px;top:675px;width:67px;padding-right:3px;">2'202,160</div>
<div class="ms c" style="left:533px;top:675px;width:40px;;">€</div>
<div class="ms" style="left:573px;top:675px;width:68px;padding-left:3px;">21%</div>
<div class="ms rr" style="left:353px;top:691px;width:53px;padding-right:3px;">2951</div>
<div class="ms rr" style="left:406px;top:691px;width:60px;padding-right:3px;">1,444</div>
<div class="ms rr" style="left:466px;top:691px;width:67px;padding-right:3px;">4'261,240</div>
<div class="ms c" style="left:533px;top:691px;width:40px;;">€</div>
<div class="ms" style="left:573px;top:691px;width:68px;padding-left:3px;">21%</div>
<div class="ms" style="left:114px;top:578px;font-size:9px;line-height:6px;color:#222">·<br>‛</div>
<div class="a" style="left:22px;top:724px;width:17px;height:14px;background:#00f6f6"></div>
<div class="a" style="left:20px;top:738px;width:621px;height:1px;background:#555"></div>
<div class="a" style="left:640px;top:498px;width:1px;height:241px;background:#666"></div>
<div class="a" style="left:466px;top:722px;width:67px;height:16px;border:1px dotted #222;background:#fff"></div>
<div class="ms rr" style="left:466px;top:723px;width:67px;padding-right:3px;padding-right:4px">37'854,89</div>
<div class="btn" style="left:1633px;top:497px;width:34px;height:35px;"><svg style="left:12px;top:9px" width="7" height="15" viewBox="0 0 8 16"><path d="M4 0l3.700 5h-2.200v6h2.200l-3.700 5l-3.700-5h2.200v-6h-2.200z" fill="#3a7ee0" stroke="#1c4fa8" stroke-width=".8"/></svg></div>
<div class="btn" style="left:1633px;top:590px;width:34px;height:35px;"><svg style="left:9px;top:9px" width="13" height="15" viewBox="0 0 13 15"><path d="M6.500 .5l6 6.500h-3.500v7h-5v-7h-3.500z" fill="#7ddc3c" stroke="#3f8f14" stroke-width="1"/></svg></div>
<div class="btn" style="left:1633px;top:632px;width:34px;height:35px;"><svg style="left:9px;top:9px" width="13" height="15" viewBox="0 0 13 15"><path d="M6.500 14.500l6-6.500h-3.500v-7h-5v7h-3.500z" fill="#7ddc3c" stroke="#3f8f14" stroke-width="1"/></svg></div>
<div class="btn" style="left:1633px;top:733px;width:34px;height:35px;"><svg style="left:8px;top:9px" width="17" height="16" viewBox="0 0 17 16"><path d="M1.500 1.500h6l2 2v7h-8z" fill="#eef4fb" stroke="#6a8fc0"/><path d="M7.500 5.500h6l2 2v7h-8z" fill="#eef4fb" stroke="#6a8fc0"/><path d="M3 9c0 4 3 5 5 4.500M8 15l1-2-2.500-.5" fill="none" stroke="#2f9a2f" stroke-width="1.800"/><path d="M13 6c0-3-2-4-4-3.500" fill="none" stroke="#2f9a2f" stroke-width="1.800"/></svg></div>
<div class="a" style="left:55px;top:777px;width:943px;height:210px;background:#f0f0f0;border-top:1px solid #8a8a8a;border-right:2px solid #7a7a7a;border-bottom:2px solid #7a7a7a;box-shadow:inset 0 1px 0 #fff"></div>
<div class="a" style="left:19px;top:777px;width:38px;height:104px;background:#f0f0f0;border-top:1px solid #666;border-left:1px solid #666;border-bottom:2px solid #777;border-radius:5px 0 0 5px;box-shadow:inset 1px 1px 0 #fff"></div>
<div class="a" style="left:19px;top:882px;width:36px;height:105px;background:#f0f0f0;border-top:1px solid #666;border-left:1px solid #666;border-bottom:2px solid #777;border-right:1px solid #999;border-radius:5px 0 0 5px;box-shadow:inset 1px 1px 0 #fff"></div>
<div class="a" style="left:20px;top:776px;width:36px;height:104px;display:flex;align-items:center;justify-content:center"><div style="transform:rotate(-90deg);font-size:19px;font-weight:bold;white-space:nowrap">Azioni</div></div>
<div class="a" style="left:20px;top:881px;width:34px;height:102px;display:flex;align-items:center;justify-content:center"><div style="transform:rotate(-90deg);font-size:18px;white-space:nowrap">Altro</div></div>
<div class="btn" style="left:72px;top:791px;width:298px;height:57px;"><svg style="left:73px;top:15px" width="24" height="24" viewBox="0 0 24 24"><defs><linearGradient id="gcb" x1="0" y1="0" x2="1" y2="1"><stop offset="0" stop-color="#ffe860"/><stop offset="1" stop-color="#d89c10"/></linearGradient></defs><path d="M1 5l10-4l11 3v13l-10 5.500l-11-4.500z" fill="url(#gcb)" stroke="#b88a10" stroke-width=".8"/><path d="M1 5l11 3.500l10-4.500l-11-3z" fill="#fff088"/><path d="M12 8.500v14l10-5.500v-13z" fill="#c48c0c"/><g transform="translate(12.5 12) scale(1)"><path d="M0 4h3.500v-3.500h3.500v3.500h3.500v3.500h-3.500v3.500h-3.500v-3.500h-3.500z" fill="#52d63c" stroke="#1c7a14" stroke-width="1.200" stroke-linejoin="round"/></g></svg></div>
<div class="ms c" style="left:137px;top:813px;width:200px;">Aggiungi articolo (F4)</div>
<div class="btn" style="left:380px;top:791px;width:298px;height:57px;"><svg style="left:73px;top:15px" width="24" height="24" viewBox="0 0 24 24"><rect x="1.5" y="2.5" width="19" height="19" fill="#fff" stroke="#7a86a8" stroke-width="1"/><rect x="1.5" y="9.0" width="19" height="6.500" fill="#f8b858"/><path d="M1.5 9.0h19M1.5 15.5h19M8.0 2.5v19M14.5 2.5v19" stroke="#b0b8d0" stroke-width="1"/><g transform="translate(12 12) scale(1)"><path d="M0 4h3.500v-3.500h3.500v3.500h3.500v3.500h-3.500v3.500h-3.500v-3.500h-3.500z" fill="#52d63c" stroke="#1c7a14" stroke-width="1.200" stroke-linejoin="round"/></g></svg></div>
<div class="ms c" style="left:445px;top:813px;width:200px;">Aggiungi altro (F3)</div>
<div class="btn" style="left:688px;top:791px;width:299px;height:57px;"><svg style="left:73px;top:15px" width="23" height="23" viewBox="0 0 29 29"><defs><linearGradient id="grx2" x1="0" y1="0" x2="0" y2="1"><stop offset="0" stop-color="#ff7a50"/><stop offset=".5" stop-color="#f0401e"/><stop offset="1" stop-color="#e03418"/></linearGradient></defs><path d="M3.500 2c2.500 1.500 6 4.500 9.500 8.500c3-3.500 6.500-7 10-9.500l4 4.500c-3.500 2.500-6.500 6-9 9.500c3 3.500 6 6.500 8.500 8.500l-4 4.500c-3-2.500-6-5.500-8.500-9c-3 3.500-6 7-9 9l-4-4.500c3.500-2.500 6.500-5.500 9-9c-3-3-6.500-6-9.500-8z" fill="url(#grx2)" stroke="#d43a1c" stroke-width="1.200" stroke-linejoin="round"/></svg></div>
<div class="ms c" style="left:753px;top:813px;width:200px;">Elimina linea</div>
<div class="btn" style="left:72px;top:853px;width:298px;height:57px;"><svg style="left:73px;top:15px" width="24" height="24" viewBox="0 0 24 24"><rect x="1.5" y="1.5" width="19" height="19" fill="#fff" stroke="#7a86a8" stroke-width="1"/><rect x="1.5" y="8.0" width="19" height="6.500" fill="#f8b858"/><path d="M1.5 8.0h19M1.5 14.5h19M8.0 1.5v19M14.5 1.5v19" stroke="#b0b8d0" stroke-width="1"/><rect x="10.500" y="10.500" width="11" height="11" fill="#f4f8ff" stroke="#5a6a98" stroke-width="1"/><path d="M12 14l3.500 5l7-10" fill="none" stroke="#1c3c9c" stroke-width="2.400"/></svg></div>
<div class="ms c" style="left:137px;top:875px;width:200px;">Carica da altro doc.</div>
<div class="btn" style="left:380px;top:853px;width:298px;height:57px;"><svg style="left:73px;top:15px" width="24" height="24" viewBox="0 0 24 24"><path d="M8 2h10c2 0 2.500 2 2.500 3.500h-3.500v11l-10 3z" fill="#f6f6f8" stroke="#b8b8c0" stroke-width=".8"/><path d="M2 15.500l6-1.500l9 2.500c0 2-1 3.500-3 3.500l-9-2c-2-.5-3-1.500-3-2.500z" fill="#e4e4ea" stroke="#a8a8b4" stroke-width=".8"/><path d="M17.500 4.500c0-1.500 1-2.500 2-2.500" fill="none" stroke="#70707c" stroke-width="1.200"/><g transform="translate(11.5 12) scale(1)"><path d="M0 4h3.500v-3.500h3.500v3.500h3.500v3.500h-3.500v3.500h-3.500v-3.500h-3.500z" fill="#52d63c" stroke="#1c7a14" stroke-width="1.200" stroke-linejoin="round"/></g></svg></div>
<div class="ms c" style="left:445px;top:875px;width:200px;">Lista rapida</div>
<div class="btn" style="left:688px;top:853px;width:299px;height:57px;"><svg style="left:73px;top:15px" width="24" height="24" viewBox="0 0 24 24"><path d="M3 5l3-3h4l1 2l2-2.500h4l1 2.500l2-1.500l2 3.500v4h-19z" fill="#fafafa" stroke="#c4c8d0" stroke-width=".8"/><path d="M1 8c6 2 15 2 22 0l-1 10c-5 3.500-15 3.500-20 0z" fill="#2a7ce0" stroke="#0c50b0" stroke-width=".8"/><path d="M1.500 9c6 2 14 2 21 0" fill="none" stroke="#7ab8f8" stroke-width="1.400"/><g transform="translate(12.5 12.5) scale(1)"><path d="M0 4h3.500v-3.500h3.500v3.500h3.500v3.500h-3.500v3.500h-3.500v-3.500h-3.500z" fill="#52d63c" stroke="#1c7a14" stroke-width="1.200" stroke-linejoin="round"/></g></svg></div>
<div class="ms c" style="left:753px;top:875px;width:200px;">Gruppi di inserimento</div>
<div class="btn" style="left:72px;top:916px;width:298px;height:57px;"><svg style="left:73px;top:15px" width="24" height="24" viewBox="0 0 24 24"><path d="M6 1l5.500 9h-3v3h-5v-3h-3z" fill="#f0502c" stroke="#b02c10" stroke-width=".8"/><path d="M13 4l4-3l4 3l-1.500 1v4h-5v-4z" fill="#5ccc44" stroke="#1c8a14" stroke-width=".8"/><path d="M3 15l3-2v2h4v5h-4v2z" fill="#5ccc44" stroke="#1c8a14" stroke-width=".8"/><path d="M11 14l6-2l6 2v7l-6 2.500l-6-2.500z" fill="#3a84e4" stroke="#1450a8" stroke-width=".8"/><path d="M11 14l6 2.500l6-2.500M17 16.500v7" fill="none" stroke="#9cc8f8" stroke-width=".9"/></svg></div>
<div class="ms c" style="left:137px;top:938px;width:200px;">Sostituzione articolo</div>
<div class="btn" style="left:688px;top:916px;width:299px;height:57px;"><svg style="left:73px;top:15px" width="22" height="24" viewBox="0 0 22 24"><path d="M9 4c2-3 6-3 8-1l-2 2l5 0l-1-5" fill="none" stroke="#58b848" stroke-width="2"/><path d="M2 7l14-2l3-3.500h2.500" fill="none" stroke="#9098a4" stroke-width="1.400"/><path d="M2 7l2 9h12l1.500-11z" fill="#d8dcec" stroke="#9098a8" stroke-width="1"/><path d="M5 8l1.500 7M8.500 7.500l.8 7.500M12 7l.3 8M15 6.500l-.3 8.500M3 11h13.500" stroke="#a8b0c4" stroke-width=".9"/><path d="M6 9h4v4h-4z" fill="#f0a8a0" opacity=".8"/><path d="M4.500 16l-.5 3h13" fill="none" stroke="#8890a0" stroke-width="1.400"/><circle cx="6" cy="21.500" r="2" fill="#585c68"/><circle cx="15" cy="21.500" r="2" fill="#585c68"/></svg></div>
<div class="ms c" style="left:753px;top:938px;width:200px;">Carrello</div>
<div class="lbl" style="left:1170px;top:785px;width:1204px;text-align:right;width:204px;letter-spacing:0.27px">Totale corpo :</div>
<div class="fld" style="left:1377px;top:780px;width:161px;height:28px;text-align:right;padding:3px 0 0 0;"><span style="position:relative;left:1px">37'854,86</span></div>
<div class="fld g" style="left:1542px;top:780px;width:80px;height:28px;"></div>
<div class="lbl" style="left:1170px;top:817px;width:1204px;text-align:right;width:204px;letter-spacing:0.05px">Spese di incasso :</div>
<div class="fld" style="left:1377px;top:812px;width:161px;height:28px;text-align:right;padding:3px 0 0 0;"><span style="position:relative;left:1px">0,00</span></div>
<div class="lbl" style="left:1170px;top:848px;width:1204px;text-align:right;width:204px;letter-spacing:0.19px">Spese spedizione :</div>
<div class="fld" style="left:1377px;top:843px;width:161px;height:28px;text-align:right;padding:3px 0 0 0;"><span style="position:relative;left:1px">0,00</span></div>
<div class="fld g" style="left:1542px;top:843px;width:80px;height:28px;padding:3px 0 0 0;font-weight:bold">€</div>
<div class="lbl" style="left:1170px;top:879px;width:1204px;text-align:right;width:204px;letter-spacing:0.1px">Totale imposte :</div>
<div class="fld" style="left:1377px;top:874px;width:161px;height:28px;text-align:right;padding:3px 0 0 0;"><span style="position:relative;left:1px">7'949,52</span></div>
<div class="fld g" style="left:1542px;top:874px;width:80px;height:28px;padding:3px 0 0 0;font-weight:bold">€</div>
<div class="lbl" style="left:1170px;top:910px;width:1204px;text-align:right;width:204px;letter-spacing:0.26px">Totale documento :</div>
<div class="fld" style="left:1377px;top:905px;width:161px;height:28px;text-align:right;padding:3px 0 0 0;font-weight:bold;"><span style="position:relative;left:1px">45'804,38</span></div>
<div class="fld g" style="left:1542px;top:905px;width:80px;height:28px;padding:3px 0 0 0;font-weight:bold">€</div>
<div class="btn" style="left:1625px;top:780px;width:31px;height:29px;text-align:center;font-size:18.67px;line-height:28px">?</div>
<div class="btn" style="left:1625px;top:905px;width:31px;height:29px;"><svg style="left:7px;top:6px" width="16" height="16" viewBox="0 0 16 16"><circle cx="6" cy="6" r="4.500" fill="#d8f0d0" stroke="#5a9a4a" stroke-width="1.300"/><path d="M4 6h4M6 4v4" stroke="#2a8a2a" stroke-width="1.200"/><path d="M9.500 9.500l5 5" stroke="#d8a040" stroke-width="2.400"/></svg></div>
<div class="lbl r" style="left:1170px;top:952px;width:150px;letter-spacing:.26px">Peso lordo :</div>
<div class="fld" style="left:1327px;top:947px;width:114px;height:32px;text-align:right;padding:4px 1px 0 0">0</div>
<div class="lbl" style="left:1457px;top:952px;width:80px;letter-spacing:.46px">Volume :</div>
<div class="fld" style="left:1538px;top:947px;width:90px;height:32px;text-align:right;padding:4px 1px 0 0">0</div>
<div class="btn" style="left:1632px;top:950px;width:28px;height:29px;text-align:center;font-size:18.67px;line-height:28px">&lt;</div>
<div class="a" style="left:0px;top:1002px;width:1680px;height:8px;background:#fcf105"></div>
<div class="a" style="left:0px;top:1010px;width:1680px;height:40px;background:linear-gradient(90deg,#1e5f9c 0px,#1d66aa 55px,#2a80c2 100px,#3794d0 125px,#3a9ad4 260px,#3392cf 420px,#2f88c8 640px,#2a7cc0 820px,#2470b6 960px,#2068b0 1100px,#1d5ca6 1200px,#1a539c 1400px,#1b4f98 1560px,#1d4c92 1680px);overflow:hidden"><div class="a" style="left:0;top:0;width:1680px;height:40px;background:linear-gradient(180deg,rgba(10,30,60,.55) 0px,rgba(20,50,90,.15) 2px,rgba(255,255,255,.06) 4px,rgba(255,255,255,0) 20px,rgba(0,0,40,.08) 40px)"></div><div class="a" style="left:1218px;top:-12px;width:34px;height:72px;transform:rotate(-30deg);background:linear-gradient(90deg,rgba(150,200,235,0),rgba(170,210,240,.55) 50%,rgba(150,200,235,0))"></div><div class="a" style="left:340px;top:0;width:60px;height:40px;transform:skewX(-30deg);background:linear-gradient(90deg,rgba(255,255,255,0),rgba(255,255,255,.07) 50%,rgba(255,255,255,0))"></div></div>
<div class="a" style="left:0px;top:1010px;width:1680px;height:1px;background:#0e2c50"></div>
<div class="a" style="left:122px;top:1011px;width:59px;height:38px;border:1px solid #17375e;border-radius:3px;background:linear-gradient(180deg,rgba(190,225,245,.55) 0%,rgba(150,205,240,.35) 45%,rgba(90,160,215,.25) 50%,rgba(120,185,230,.4) 100%);box-shadow:inset 0 0 0 1px rgba(215,238,252,.65)"></div>
<div class="a" style="left:254px;top:1011px;width:50px;height:38px;clip-path:inset(0 0 0 47px);border:1px solid #17375e;border-radius:3px;background:linear-gradient(180deg,rgba(190,225,245,.55) 0%,rgba(150,205,240,.35) 45%,rgba(90,160,215,.25) 50%,rgba(120,185,230,.4) 100%);box-shadow:inset 0 0 0 1px rgba(215,238,252,.65)"></div>
<div class="a" style="left:250px;top:1011px;width:50px;height:38px;clip-path:inset(0 0 0 47px);border:1px solid #17375e;border-radius:3px;background:linear-gradient(180deg,rgba(190,225,245,.55) 0%,rgba(150,205,240,.35) 45%,rgba(90,160,215,.25) 50%,rgba(120,185,230,.4) 100%);box-shadow:inset 0 0 0 1px rgba(215,238,252,.65)"></div>
<div class="a" style="left:246px;top:1011px;width:50px;height:38px;border:1px solid #17375e;border-radius:3px;background:linear-gradient(180deg,rgba(190,225,245,.55) 0%,rgba(150,205,240,.35) 45%,rgba(90,160,215,.25) 50%,rgba(120,185,230,.4) 100%);box-shadow:inset 0 0 0 1px rgba(215,238,252,.65)"></div>
<div class="a" style="left:307px;top:1011px;width:60px;height:38px;border:1px solid #17375e;border-radius:3px;background:linear-gradient(180deg,rgba(190,225,245,.55) 0%,rgba(150,205,240,.35) 45%,rgba(90,160,215,.25) 50%,rgba(120,185,230,.4) 100%);box-shadow:inset 0 0 0 1px rgba(215,238,252,.65)"></div>
<svg style="left:7px;top:1011px" width="40" height="40" viewBox="0 0 40 40"><defs><radialGradient id="orb" cx="50%" cy="85%" r="85%"><stop offset="0" stop-color="#38c4f4"/><stop offset=".35" stop-color="#1c78c4"/><stop offset=".7" stop-color="#1c4c8c"/><stop offset="1" stop-color="#5a88b8"/></radialGradient><linearGradient id="orbh" x1="0" y1="0" x2="0" y2="1"><stop offset="0" stop-color="#dce8f4" stop-opacity=".85"/><stop offset="1" stop-color="#a8c4e0" stop-opacity=".15"/></linearGradient></defs><circle cx="20" cy="19" r="18.500" fill="url(#orb)" stroke="#6c9ccc" stroke-width="1.200"/><path d="M3 15c2-9 10-13.500 17-13.500s15 4.500 17 13.500c-5 3-11 3.500-17 3.500s-12-.5-17-3.500z" fill="url(#orbh)"/><path d="M10.500 9.500c3-2 5.500-2 8.500-.5l-1.500 8c-2.500-1.500-5.500-1.500-8.500 0z" fill="#f0582c"/><path d="M20.500 9.500c3 1.500 6 1.500 9-.5l-1.500 8c-3 2-6 2-9 .5z" fill="#98cc48"/><path d="M8.500 19c3-1.500 6-1.500 8.500 0l-1.500 8.500c-2.500-1.500-5.500-1.500-8.500 0z" fill="#38a4ec"/><path d="M18.500 19.500c3 1.500 6 1.500 9-.5l-1.500 8.500c-3 2-6 2-9 .5z" fill="#fcc43c"/></svg>
<svg style="left:70px;top:1010px" width="40" height="40" viewBox="0 0 40 40"><defs><linearGradient id="gie" x1="0" y1="0" x2="0" y2="1"><stop offset="0" stop-color="#48b4ec"/><stop offset=".5" stop-color="#7cd8fc"/><stop offset="1" stop-color="#2c9ce0"/></linearGradient></defs><text x="5" y="33" font-family="Liberation Sans,sans-serif" font-weight="bold" font-size="50" fill="url(#gie)" stroke="#2488d0" stroke-width=".6">e</text><path d="M5.500 33.500c-3-6 2-16 10-23c8-6.500 16-8 18-4.500" fill="none" stroke="#c89c20" stroke-width="3.600" stroke-linecap="round"/><path d="M5.500 33.500c-3-6 2-16 10-23c8-6.500 16-8 18-4.500" fill="none" stroke="#f8d848" stroke-width="2.200" stroke-linecap="round"/></svg>
<svg style="left:135px;top:1016px" width="33" height="30" viewBox="0 0 33 30"><path d="M1 4h9l2 2h8l2 2h10v20h-31z" fill="#f8e4a0" stroke="#e0c070" stroke-width=".8"/><rect x="3" y="1.500" width="3.500" height="2.500" fill="#5c9438"/><rect x="11" y="3.500" width="3.500" height="2.500" fill="#d05428"/><rect x="19" y="5.500" width="3.500" height="2.500" fill="#4c8cb8"/><path d="M1 9h31v19h-31z" fill="#fae8b0"/><path d="M1 12h31M1 15h31M1 18h31" stroke="#f4dc98" stroke-width="1"/><path d="M5 18h23v10h-23z" fill="#c4e4f8" stroke="#a8d0ec" stroke-width="1"/><path d="M8 21h17v7h-17z" fill="#8cc4ec"/><path d="M11 24h11v4h-11z" fill="#f8d048"/></svg>
<svg style="left:198px;top:1018px" width="28" height="26" viewBox="0 0 28 26"><rect x="5" y="1.500" width="21" height="21" fill="#b8d8f0" opacity=".8"/><rect x="3" y="2" width="21" height="21" fill="#c8e0f4" opacity=".9"/><rect x="1" y="2.500" width="21" height="21" fill="#a8cce8"/><circle cx="11.800" cy="12.500" r="8.800" fill="#f07c1c" stroke="#f8a860" stroke-width=".8"/><path d="M8.500 6.500l9.500 6l-9.500 6z" fill="#fff"/></svg>
<svg style="left:256px;top:1013px" width="30" height="36" viewBox="0 0 30 36"><path d="M5 7l2-2.500l2 2l2-4l2.500 3.500l3-4l1.500 4l3-2l2 3.500" fill="#4a6a20" stroke="#3a5a18"/><path d="M3 8c4-2 8 1 12 0c4 1 8-2 12 0c3 6 0 13-4 18c-3 4-6 6.500-8 7.500c-2-1-5-3.500-8-7.500c-4-5-7-12-4-18z" fill="#e02c24"/><path d="M8 12l1 1M14 11l1 1M20 13l1 1M11 18l1 1M17 18l1 1M14 24l1 1" stroke="#b81810" stroke-width="1.500"/></svg>
<svg style="left:322px;top:1015px" width="30" height="30" viewBox="0 0 32 32"><circle cx="16" cy="16" r="15" fill="#e8e8e8"/><path d="M16 16L3.010 8.500A15 15 0 0 1 28.990 8.500z" fill="#dc3a2c"/><path d="M16 16L28.990 8.500A15 15 0 0 1 16 31z" fill="#f8d030"/><path d="M16 16L16 31A15 15 0 0 1 3.010 8.500z" fill="#4aaa48"/><circle cx="16" cy="16" r="7.200" fill="#f4f4f4"/><circle cx="16" cy="16" r="5.600" fill="#4a88d0"/></svg>
<div class="a" style="left:1465px;top:1020px;width:20px;font-size:11.500px;line-height:14px;color:#e8f0f8">IT</div>
<svg style="left:1492px;top:1026px" width="9" height="6" viewBox="0 0 9 6"><path d="M4.500 .5l4 5h-8z" fill="#fff"/></svg>
<svg style="left:1514px;top:1022px" width="16" height="16" viewBox="0 0 16 16"><path d="M1.500 1v14" stroke="#fff" stroke-width="1.600"/><path d="M3.500 2.500c2-1 3 .5 5 .5v2c1 .3 3 .3 5-.5-1 2-1 3-2 5-2 .5-3-.2-4-.5v-1.500c-1.500-.5-3-.5-4 0z" fill="#fff"/></svg>
<svg style="left:1538px;top:1021px" width="17" height="17" viewBox="0 0 17 17"><rect x="4.500" y="5.500" width="11" height="8" fill="none" stroke="#fff" stroke-width="1.300"/><path d="M6 16h8M10 13.500v2.500" stroke="#fff" stroke-width="1.300"/><path d="M1.500 3.500h4v4.500h-4zM2.500 1v2.500M4.500 1v2.500M3.500 8v3.500h1.500" fill="#fff" stroke="#fff" stroke-width="1"/></svg>
<svg style="left:1562px;top:1022px" width="18" height="16" viewBox="0 0 18 16"><path d="M1.500 5.500h2.500l4-4v13l-4-4h-2.500z" fill="#fff" stroke="#fff" stroke-width=".6"/><path d="M10.500 5.500c1 1 1 4 0 5M13 3.500c2 2.500 2 6.500 0 9" fill="none" stroke="#fff" stroke-width="1.200"/></svg>
<div class="a" style="left:1585px;top:1015px;width:80px;font-size:11.500px;line-height:14px;color:#fff;text-align:center;width:80px">13:09</div>
<div class="a" style="left:1585px;top:1032px;width:80px;font-size:11.500px;line-height:14px;color:#fff;text-align:center;width:80px">10/04/2013</div>
<div class="a" style="left:1666px;top:1010px;width:14px;height:40px;border-left:1px solid #13305a;background:linear-gradient(180deg,rgba(200,225,245,.55),rgba(120,160,205,.35) 50%,rgba(60,100,160,.3) 100%);box-shadow:inset 1px 0 0 rgba(220,235,250,.5)"></div>
</body></html>
